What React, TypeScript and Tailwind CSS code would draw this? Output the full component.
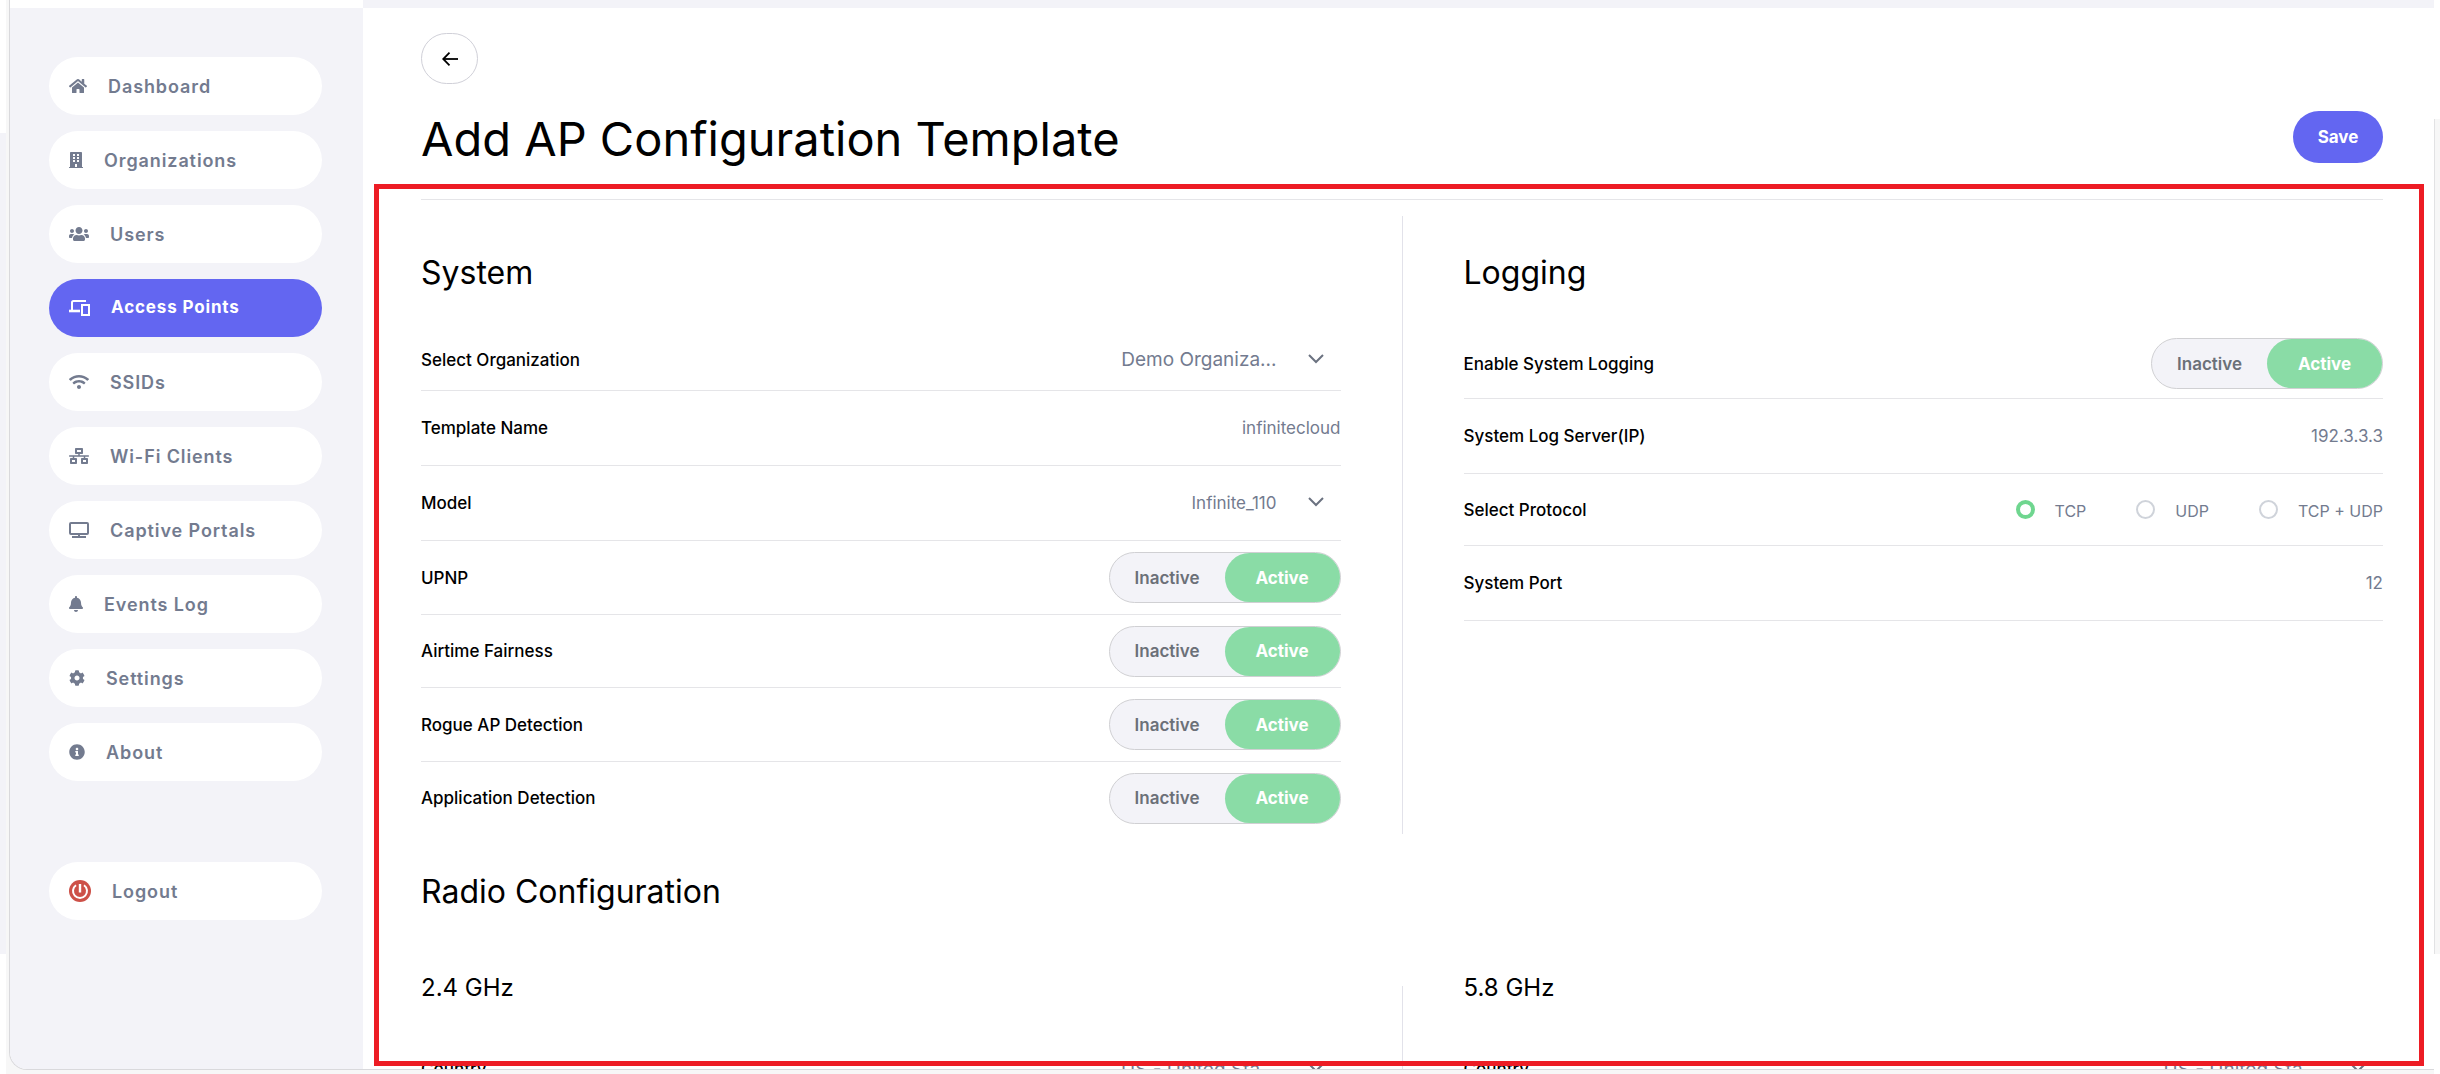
import { useId, useState, type ReactNode } from "react";
import { FaBell, FaBuilding, FaCog, FaHome, FaInfoCircle, FaNetworkWired, FaUsers, FaWifi } from "react-icons/fa";

function BackIcon() {
  return (
    <svg width="16" height="14" viewBox="0 0 16 14" fill="none" stroke="currentColor" strokeWidth="1.8" aria-hidden="true">
      <path d="M1 7H16" />
      <path d="M7.5 0.7L1.2 7L7.5 13.3" />
    </svg>
  );
}

function DevicesIcon() {
  return (
    <svg width="21" height="16" viewBox="0 0 21 16" fill="none" stroke="currentColor" strokeWidth="2" aria-hidden="true">
      <path d="M17 1H4.5Q3 1 3 2.5V10" />
      <path d="M0 11H11" strokeWidth="2.6" />
      <path d="M13 5H20V15H13Z" />
    </svg>
  );
}

function MonitorIcon() {
  return (
    <svg width="20" height="16" viewBox="0 0 20 16" fill="none" stroke="currentColor" strokeWidth="2" aria-hidden="true">
      <rect x="1" y="1" width="18" height="11" rx="1" />
      <path d="M3 15H17" />
      <path d="M10 12V15" />
    </svg>
  );
}

function PowerIcon() {
  return (
    <svg width="22" height="22" viewBox="0 0 22 22" fill="none" stroke="#fff" strokeWidth="2" aria-hidden="true">
      <circle cx="11" cy="11" r="11" fill="#cd5148" stroke="none" />
      <path d="M7 5.2A7 7 0 1 0 15 5.2" />
      <path d="M11 4V12.5" strokeWidth="2.4" />
    </svg>
  );
}

function ChevronIcon() {
  return (
    <svg width="16" height="10" viewBox="0 0 16 10" fill="none" stroke="#6b7280" strokeWidth="2" aria-hidden="true">
      <path d="M1 1L8 8L15 1" />
    </svg>
  );
}

const navItems = [
  { label: "Dashboard", icon: <FaHome size={18} /> },
  { label: "Organizations", icon: <FaBuilding className="h-4 w-3.5" /> },
  { label: "Users", icon: <FaUsers className="h-4 w-5" /> },
  { label: "Access Points", icon: <DevicesIcon />, active: true },
  { label: "SSIDs", icon: <FaWifi className="h-4 w-5" /> },
  { label: "Wi-Fi Clients", icon: <FaNetworkWired className="h-4 w-5" /> },
  { label: "Captive Portals", icon: <MonitorIcon /> },
  { label: "Events Log", icon: <FaBell className="h-4 w-3.5" /> },
  { label: "Settings", icon: <FaCog size={16} /> },
  { label: "About", icon: <FaInfoCircle size={16} /> },
];

function NavItem({ label, icon, active }: { label: string; icon: ReactNode; active?: boolean }) {
  return (
    <a
      href="#"
      className={`flex h-[58px] items-center gap-[21px] rounded-full px-5 tracking-wider ${
        active ? "bg-[#6366f1] text-[17px] font-bold text-white" : "bg-white text-[18px] font-semibold text-[#737b8f]"
      }`}
    >
      {icon}
      {label}
    </a>
  );
}

function Row({ label, htmlFor, height = "h-[75px]", last, children }: {
  label: string;
  htmlFor?: string;
  height?: string;
  last?: boolean;
  children: ReactNode;
}) {
  return (
    <div className={`flex items-center justify-between ${height} ${last ? "" : "border-b border-[#e5e5e8]"}`}>
      <label htmlFor={htmlFor} className="pt-0.5 text-[17px] font-medium text-black">{label}</label>
      {children}
    </div>
  );
}

function ToggleRow({ label, height = "h-[74px]", last }: { label: string; height?: string; last?: boolean }) {
  const id = useId();
  const [on, setOn] = useState(true);
  const selected = "bg-[#8adca6] font-bold text-white";
  const idle = "text-[#6b7078]";
  return (
    <Row label={label} htmlFor={id} height={height} last={last}>
      <div className="flex h-[51px] w-[232px] rounded-full border border-[#d0d0d3] bg-[#f3f3f8] text-[17px] font-semibold">
        <button type="button" onClick={() => setOn(false)} className={`flex-1 rounded-full pt-0.5 ${on ? idle : selected}`}>
          Inactive
        </button>
        <button id={id} type="button" onClick={() => setOn(true)} className={`flex-1 rounded-full pt-0.5 ${on ? selected : idle}`}>
          Active
        </button>
      </div>
    </Row>
  );
}

function InputRow({ label, value }: { label: string; value: string }) {
  const id = useId();
  return (
    <Row label={label} htmlFor={id}>
      <input id={id} defaultValue={value} className="w-60 bg-transparent pt-0.5 text-right text-[17px] text-[#737b8f] outline-none" />
    </Row>
  );
}

function SelectRow({ label, value, size = "text-[17px]", height }: {
  label: string;
  value: string;
  size?: string;
  height?: string;
}) {
  const id = useId();
  return (
    <Row label={label} htmlFor={id} height={height}>
      <div className="relative flex items-center">
        <select id={id} className={`w-60 appearance-none bg-transparent pt-0.5 pr-16 text-right text-[#737b8f] outline-none ${size}`}>
          <option>{value}</option>
        </select>
        <span className="pointer-events-none absolute right-[17px] pb-0.5">
          <ChevronIcon />
        </span>
      </div>
    </Row>
  );
}

function ProtocolRow() {
  const [protocol, setProtocol] = useState("TCP");
  return (
    <Row label="Select Protocol" height="h-[72px]">
      <div className="flex gap-[50px]">
        {["TCP", "UDP", "TCP + UDP"].map((p) => (
          <label key={p} className="flex items-center gap-5 text-[16px] text-[#737b8f]">
            <input
              type="radio"
              name="protocol"
              checked={protocol === p}
              onChange={() => setProtocol(p)}
              className="size-[19px] appearance-none rounded-full border-2 border-[#cfd3da] checked:border-4 checked:border-[#6fd68f]"
            />
            <span className="pt-0.5">{p}</span>
          </label>
        ))}
      </div>
    </Row>
  );
}

function Divider() {
  return <div className="mt-4 bg-[#e2e2ea]" />;
}

export default function App() {
  return (
    <div className="flex h-screen overflow-hidden bg-white font-[Inter,sans-serif]">
      {/* Page behind the window, left edge */}
      <div className="w-1.5 shrink-0 pt-[133px] pb-[120px]">
        <div className="h-full bg-[#f3f3f8]" />
      </div>

      <div className="flex min-w-0 flex-1 flex-col bg-[#f7f7f7] pb-1 pl-[3px]">
        <div className="relative flex min-h-0 flex-1 overflow-hidden rounded-bl-[18px] border-b border-l border-[#d9d9dc] bg-white">
          <aside className="flex w-[353px] shrink-0 flex-col">
            <div className="h-2 bg-white" />
            <nav className="flex flex-1 flex-col gap-4 bg-[#f3f3f8] pt-[49px] pr-[41px] pl-[39px]">
              {navItems.map((item) => (
                <NavItem key={item.label} {...item} />
              ))}
              <div className="mt-[65px]">
                <NavItem label="Logout" icon={<PowerIcon />} />
              </div>
            </nav>
          </aside>

          <main className="min-w-0 flex-1">
            <div className="h-2 bg-[#f3f3f8]" />
            <div className="pt-[25px] pr-[51px] pl-[58px]">
              <button
                type="button"
                aria-label="Back"
                className="flex h-[51px] w-[57px] items-center justify-center rounded-full border border-[#d0d0d8] text-black"
              >
                <BackIcon />
              </button>

              <div className="mt-[27px] flex h-[52px] items-center justify-between">
                <h1 className="pt-1 text-[47px] text-black">Add AP Configuration Template</h1>
                <button type="button" className="h-[52px] w-[90px] rounded-full bg-[#6366f1] pt-0.5 text-[17px] font-bold text-white">
                  Save
                </button>
              </div>

              <hr className="mt-9 border-[#e5e5e8]" />

              <div className="grid grid-cols-[1fr_1px_1fr] gap-x-[61px]">
                <section>
                  <h2 className="flex h-[129px] items-center pt-4 text-[32px] text-black">System</h2>
                  <SelectRow label="Select Organization" value="Demo Organiza..." size="text-[19px]" height="h-[62px]" />
                  <InputRow label="Template Name" value="infinitecloud" />
                  <SelectRow label="Model" value="Infinite_110" />
                  <ToggleRow label="UPNP" />
                  <ToggleRow label="Airtime Fairness" height="h-[73px]" />
                  <ToggleRow label="Rogue AP Detection" />
                  <ToggleRow label="Application Detection" height="h-[72px]" last />
                </section>
                <Divider />
                <section>
                  <h2 className="flex h-[129px] items-center pt-4 text-[32px] text-black">Logging</h2>
                  <ToggleRow label="Enable System Logging" height="h-[70px]" />
                  <InputRow label="System Log Server(IP)" value="192.3.3.3" />
                  <ProtocolRow />
                  <InputRow label="System Port" value="12" />
                </section>
              </div>

              <h2 className="mt-9 text-[32px] leading-[44px] text-black">Radio Configuration</h2>

              <div className="mt-14 grid grid-cols-[1fr_1px_1fr] gap-x-[61px]">
                <section>
                  <h3 className="mb-[26px] text-[24px] leading-9 text-black">2.4 GHz</h3>
                  <SelectRow label="Country" value="US - United Sta..." size="text-[19px]" />
                </section>
                <Divider />
                <section>
                  <h3 className="mb-[26px] text-[24px] leading-9 text-black">5.8 GHz</h3>
                  <SelectRow label="Country" value="US - United Sta..." size="text-[19px]" />
                </section>
              </div>
            </div>
          </main>

          {/* Highlight around the form */}
          <div className="pointer-events-none absolute top-[184px] right-[10px] bottom-[3px] left-[364px] border-[5px] border-[#ed1c24]" />
        </div>
      </div>

      {/* Page behind the window, right edge */}
      <div className="w-1.5 shrink-0 pt-[119px] pb-[120px]">
        <div className="h-full border-l border-[#e2e2e4] bg-[#f7f7f7]" />
      </div>
    </div>
  );
}
